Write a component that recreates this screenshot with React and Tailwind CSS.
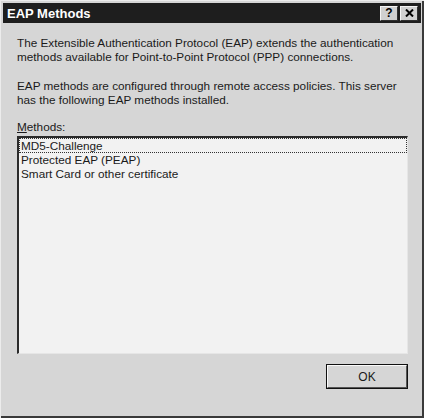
export default function App() {
  return (
    <div className="w-[424px] h-[418px] bg-[#d6d6d6] relative overflow-hidden" style={{ fontFamily: '"Liberation Sans", Arial, sans-serif' }}>
      <div className="absolute inset-0 border-r-[2px] border-b-[2px] border-[#3a3a3a]" />
      <div className="absolute inset-0 border-l border-t border-[#ececec]" />
      <div className="flex flex-col h-full pl-[3px] pt-[3px] pr-[3px] pb-[3px]">
        <div className="h-[20px] bg-[#1e1e1e] flex items-center pl-[4px] pr-[3px]">
          <span className="text-white font-bold text-[13px] leading-none">EAP Methods</span>
          <div className="ml-auto flex gap-[2px]">
            <div className="w-[18px] h-[15px] bg-[#d0d0d0] border-t border-l border-[#f4f4f4] border-r border-b border-r-[#303030] border-b-[#303030] flex items-center justify-center text-[12px] font-bold leading-none text-black">?</div>
            <div className="w-[18px] h-[15px] bg-[#d0d0d0] border-t border-l border-[#f4f4f4] border-r border-b border-r-[#303030] border-b-[#303030] flex items-center justify-center text-black">
              <svg width="9" height="8" viewBox="0 0 9 8"><path d="M1 0.5 L8 7.5 M8 0.5 L1 7.5" stroke="black" strokeWidth="2" /></svg>
            </div>
          </div>
        </div>
        <div className="flex-1 flex flex-col pl-[14px] pr-[13px] text-[11.75px] leading-[14px] text-[#1a1a1a]">
          <p className="mt-[13px]">The Extensible Authentication Protocol (EAP) extends the authentication methods available for Point-to-Point Protocol (PPP) connections.</p>
          <p className="mt-[15px]">EAP methods are configured through remote access policies. This server has the following EAP methods installed.</p>
          <p className="mt-[13px]"><span className="underline">M</span>ethods:</p>
          <div className="mt-[2px] h-[218px] bg-[#f2f2f2] border-t-[2px] border-l-[2px] border-t-[#2a2a2a] border-l-[#2a2a2a] border-r border-b border-r-[#e6e6e6] border-b-[#e6e6e6] flex flex-col">
            <div className="border border-dotted border-[#333] px-[1px] leading-[13px]">MD5-Challenge</div>
            <div className="px-[2px] leading-[14px]">Protected EAP (PEAP)</div>
            <div className="px-[2px] leading-[14px]">Smart Card or other certificate</div>
          </div>
          <div className="flex justify-end mt-[10px]">
            <div className="w-[82px] h-[25px] border border-[#111] flex">
              <div className="flex-1 border-t border-l border-t-[#fafafa] border-l-[#fafafa] border-r border-b border-r-[#555] border-b-[#555] flex items-center justify-center text-[12px]">OK</div>
            </div>
          </div>
        </div>
      </div>
    </div>
  );
}
